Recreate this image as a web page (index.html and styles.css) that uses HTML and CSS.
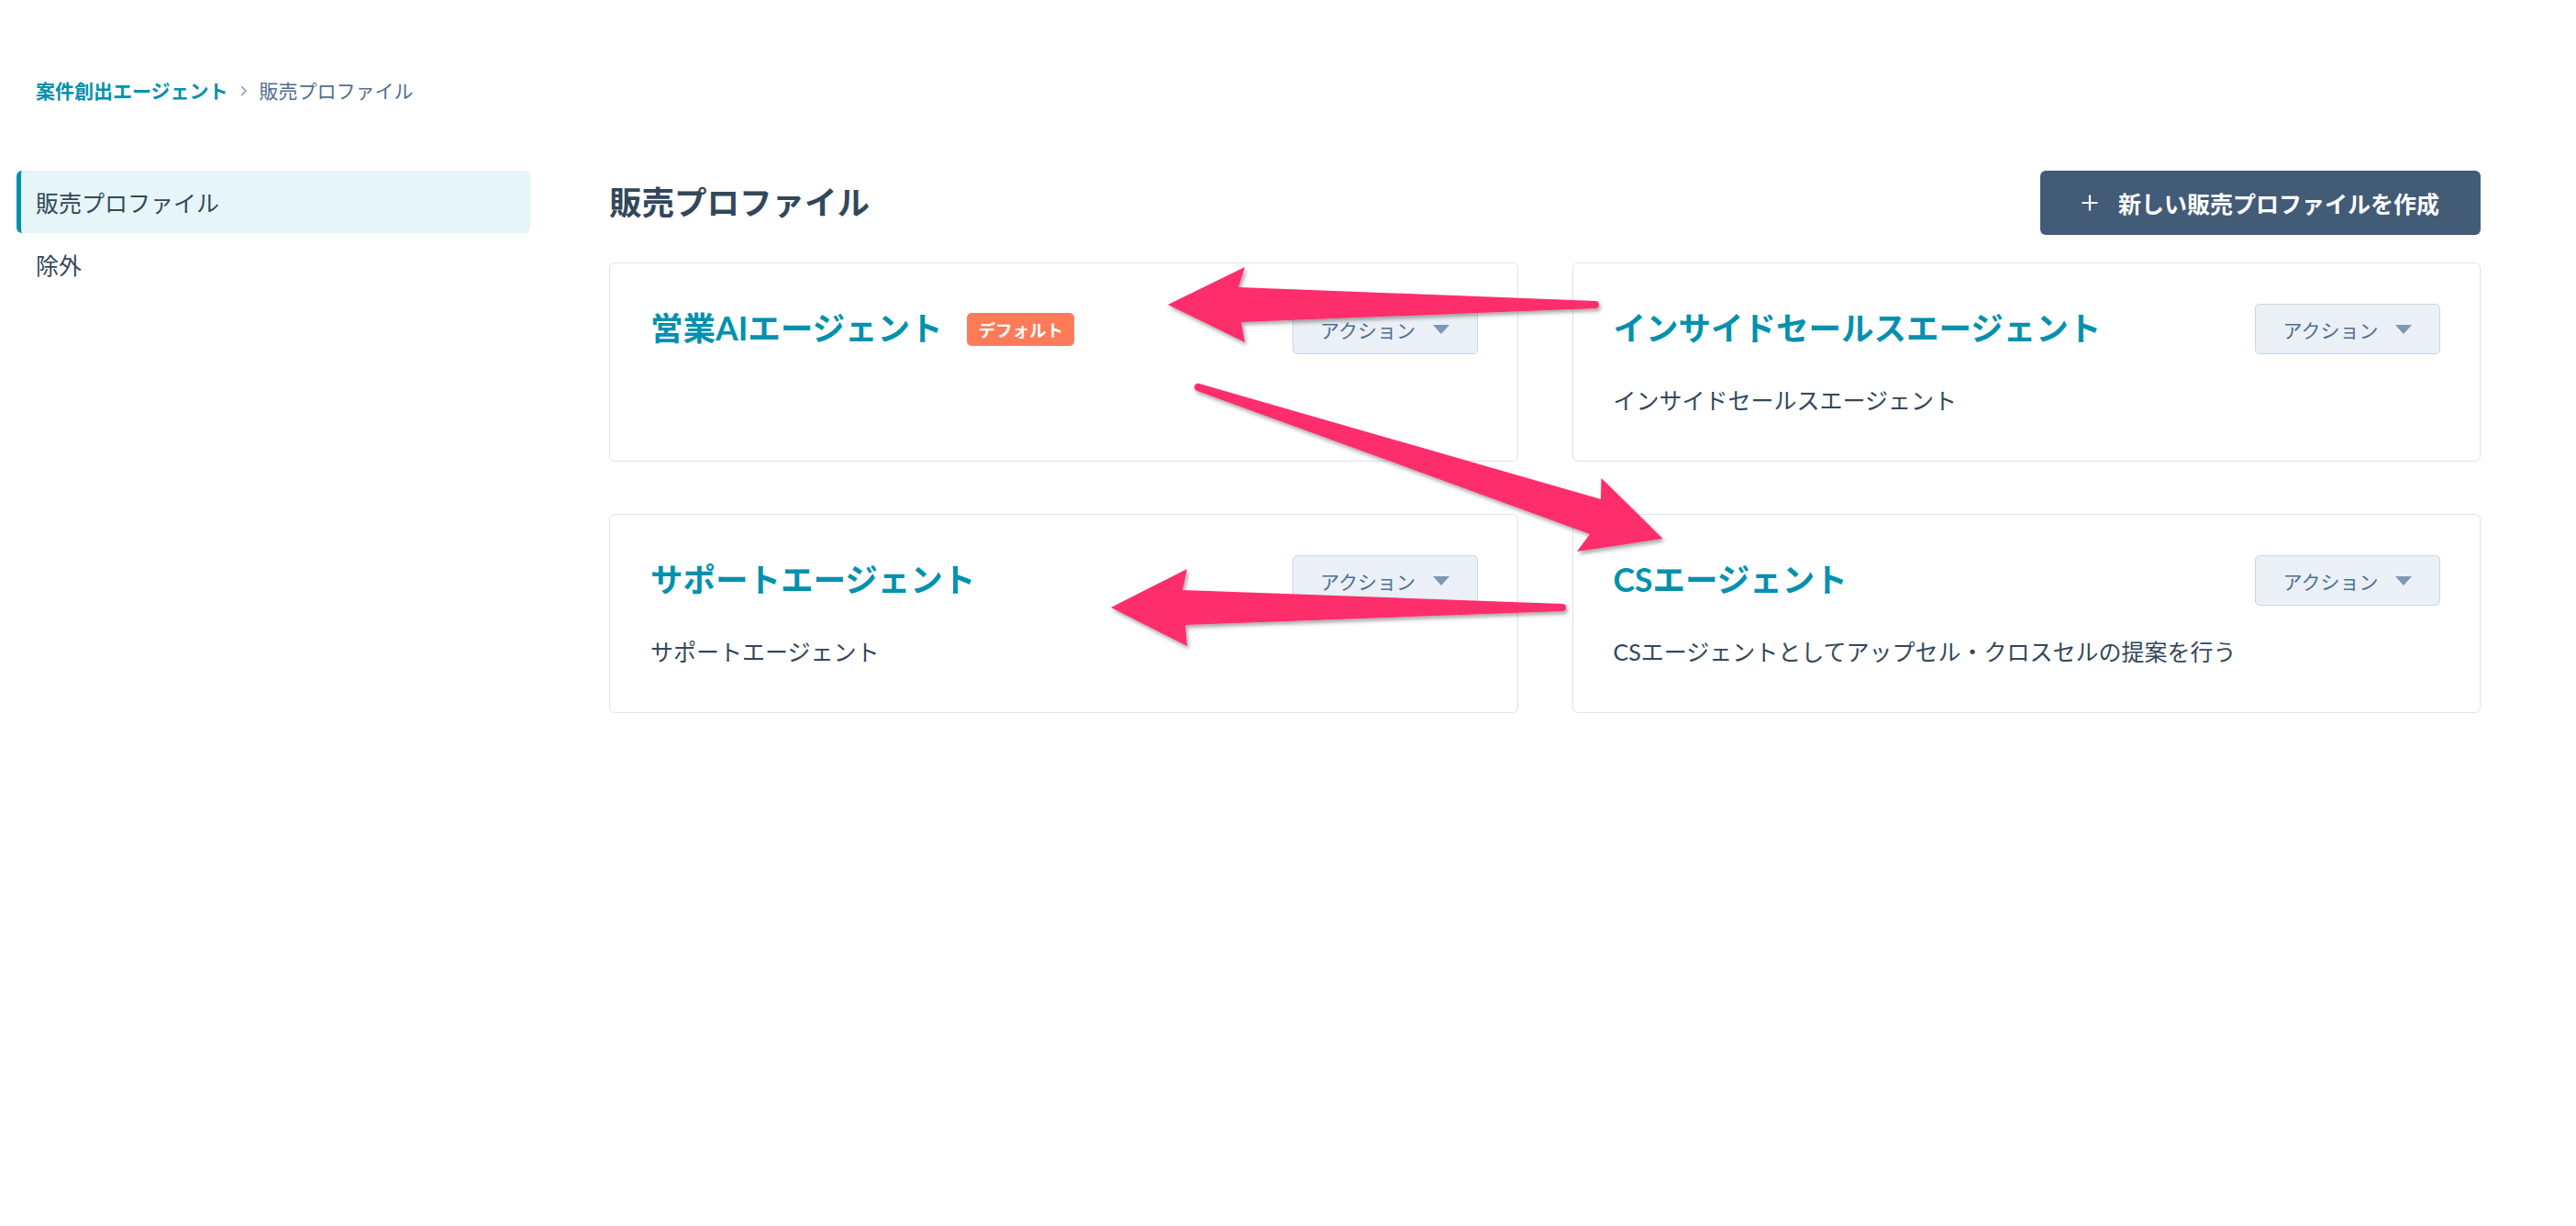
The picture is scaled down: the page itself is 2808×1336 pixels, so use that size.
FILE: index.html
```html
<!DOCTYPE html>
<html lang="ja">
<head>
<meta charset="utf-8">
<title>販売プロファイル</title>
<link rel="stylesheet" href="styles.css">
</head>
<body>
<div class="page">
  <nav class="breadcrumb">
    <span class="crumb-link">案件創出エージェント</span>
    <svg class="crumb-sep" width="8" height="12" viewBox="0 0 8 12"><path d="M1.5 1.5 L6 6 L1.5 10.5" fill="none" stroke="#7c98b6" stroke-width="1.5" stroke-linecap="round" stroke-linejoin="round"/></svg>
    <span class="crumb-current">販売プロファイル</span>
  </nav>
  <div class="layout">
    <aside class="sidebar">
      <div class="side-item active">販売プロファイル</div>
      <div class="side-item">除外</div>
    </aside>
    <main class="main">
      <div class="main-header">
        <h1 class="page-title">販売プロファイル</h1>
        <button class="btn-primary">
          <svg class="plus" width="18" height="18" viewBox="0 0 18 18"><path d="M9 0.5 V17.5 M0.5 9 H17.5" stroke="#fff" stroke-width="2.2" fill="none"/></svg>
          <span>新しい販売プロファイルを作成</span>
        </button>
      </div>
      <div class="card-grid">
        <section class="card">
          <div class="card-head">
            <div class="card-title">
              <h2>営業AIエージェント</h2>
              <span class="badge">デフォルト</span>
            </div>
            <button class="btn-action"><span>アクション</span><svg width="18" height="10" viewBox="0 0 18 10"><path d="M0 0 H18 L9 10 Z" fill="#7c98b6"/></svg></button>
          </div>
        </section>
        <section class="card">
          <div class="card-head">
            <div class="card-title">
              <h2>インサイドセールスエージェント</h2>
            </div>
            <button class="btn-action"><span>アクション</span><svg width="18" height="10" viewBox="0 0 18 10"><path d="M0 0 H18 L9 10 Z" fill="#7c98b6"/></svg></button>
          </div>
          <p class="card-desc">インサイドセールスエージェント</p>
        </section>
        <section class="card">
          <div class="card-head">
            <div class="card-title">
              <h2>サポートエージェント</h2>
            </div>
            <button class="btn-action"><span>アクション</span><svg width="18" height="10" viewBox="0 0 18 10"><path d="M0 0 H18 L9 10 Z" fill="#7c98b6"/></svg></button>
          </div>
          <p class="card-desc">サポートエージェント</p>
        </section>
        <section class="card">
          <div class="card-head">
            <div class="card-title">
              <h2>CSエージェント</h2>
            </div>
            <button class="btn-action"><span>アクション</span><svg width="18" height="10" viewBox="0 0 18 10"><path d="M0 0 H18 L9 10 Z" fill="#7c98b6"/></svg></button>
          </div>
          <p class="card-desc">CSエージェントとしてアップセル・クロスセルの提案を行う</p>
        </section>
      </div>
    </main>
  </div>
  <svg class="annotations" width="2808" height="1336" viewBox="0 0 2808 1336">
    <defs>
      <filter id="shadow" x="-10%" y="-20%" width="120%" height="140%">
        <feDropShadow dx="2" dy="3" stdDeviation="2" flood-color="#000" flood-opacity="0.35"/>
      </filter>
    </defs>
    <g fill="#fe2d6d" filter="url(#shadow)">
      <path d="M1273 332 L1357 291 L1350 313 L1739 328 A4 4 0 0 1 1739 336 L1353 351 L1357 373 Z"/>
      <path d="M1307 418 L1745 544 L1745.5 521 L1812.6 587 L1719 601 L1733 582 L1305 426 A4 4 0 0 1 1307 418 Z"/>
      <path d="M1211 662 L1294 620 L1289 643 L1703 658 A4 4 0 0 1 1703 666 L1292 681 L1294 704 Z"/>
    </g>
  </svg>
</div>
</body>
</html>
```

FILE: styles.css
```css
html, body {
  margin: 0;
  padding: 0;
  background: #ffffff;
}

body {
  font-family: "Lato", "Noto Sans CJK JP", sans-serif;
  color: #33475b;
}

.page {
  position: relative;
  width: 2808px;
  height: 1336px;
  box-sizing: border-box;
  padding: 84px 104px 0 18px;
}

.breadcrumb {
  display: flex;
  align-items: center;
  gap: 13px;
  height: 30px;
  padding-left: 21px;
  font-size: 21px;
  line-height: 30px;
}

.crumb-link {
  color: #0091ae;
  font-weight: 700;
}

.crumb-current {
  color: #516f90;
}

.layout {
  display: flex;
  margin-top: 72px;
}

.sidebar {
  flex: none;
  width: 560px;
}

.side-item {
  display: flex;
  align-items: center;
  height: 68px;
  padding-left: 21px;
  font-size: 25px;
  color: #33475b;
  border-radius: 6px;
}

.side-item.active {
  background: #e5f5f8;
  border-left: 5px solid #0091ae;
  padding-left: 16px;
}

.main {
  flex: 1;
  margin-left: 86px;
}

.main-header {
  display: flex;
  align-items: center;
  justify-content: space-between;
  height: 70px;
}

.page-title {
  margin: 0;
  font-size: 35.5px;
  font-weight: 700;
  line-height: 1.2;
  color: #33475b;
}

.btn-primary {
  display: flex;
  align-items: center;
  gap: 22px;
  height: 70px;
  padding: 0 45px;
  background: #425b76;
  border: none;
  border-radius: 6px;
  color: #ffffff;
  font-family: inherit;
  font-size: 25px;
  font-weight: 700;
}

.card-grid {
  display: grid;
  grid-template-columns: 1fr 1fr;
  column-gap: 59px;
  row-gap: 57px;
  margin-top: 30px;
}

.card {
  border: 1px solid #dfe3eb;
  border-radius: 6px;
  padding: 44px 43px 48px 44px;
  min-height: 215px;
  box-sizing: border-box;
}

.card-head {
  display: flex;
  align-items: center;
  justify-content: space-between;
  height: 55px;
}

.card-title {
  display: flex;
  align-items: center;
  gap: 27px;
}

.card-title h2 {
  margin: 0;
  font-size: 35.5px;
  font-weight: 700;
  line-height: 1.2;
  color: #0091ae;
}

.badge {
  display: flex;
  align-items: center;
  height: 36px;
  padding: 0 12px;
  background: #ff7a59;
  color: #ffffff;
  font-size: 18.5px;
  font-weight: 700;
  border-radius: 5px;
}

.btn-action {
  display: flex;
  align-items: center;
  justify-content: center;
  gap: 19px;
  width: 202px;
  height: 55px;
  box-sizing: border-box;
  padding: 0;
  background: #eaf0f6;
  border: 1px solid #cbd6e2;
  border-radius: 5px;
  font-family: inherit;
  font-size: 21px;
  color: #516f90;
}

.card-desc {
  margin: 32px 0 0;
  font-size: 25px;
  line-height: 36px;
  color: #33475b;
}

.annotations {
  position: absolute;
  top: 0;
  left: 0;
  pointer-events: none;
}
```
